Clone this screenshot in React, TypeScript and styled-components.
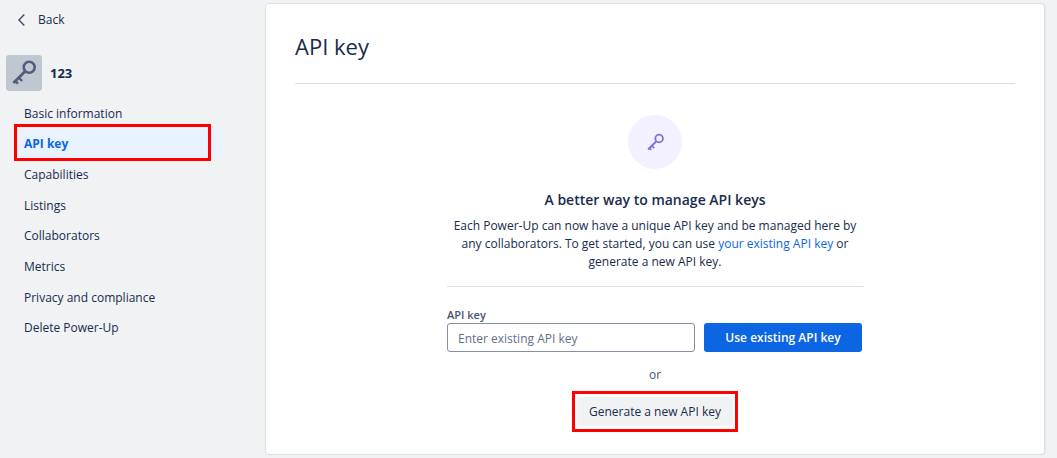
import React, { useState } from "react";
import styled, { createGlobalStyle, css } from "styled-components";

const ink = "#172b4d";
const inkSubtle = "#44546f";
const blue = "#0c66e4";
const line = "#dcdfe4";

const GlobalStyle = createGlobalStyle`
  * { box-sizing: border-box; }
  body {
    margin: 0;
    background: #f1f2f4;
    color: ${ink};
    font-family: "Open Sans", "Noto Sans", sans-serif;
    font-size: 12px;
    line-height: 18px;
  }
  button, input { font: inherit; }
  a { color: inherit; text-decoration: none; }
`;

const Page = styled.div`
  display: flex;
  min-height: 100vh;
  padding: 3px 12px 3px 0;
`;

const Sidebar = styled.aside`
  flex: 0 0 265px;
  padding: 8px 43px 0 6px;
`;

const BackLink = styled.a`
  display: flex;
  align-items: center;
  gap: 13px;
  padding-left: 12px;
`;

const Project = styled.div`
  display: flex;
  align-items: center;
  gap: 8px;
  margin-top: 26px;
  font-size: 13px;
  font-weight: 700;
  line-height: 20px;
`;

const ProjectIcon = styled.span`
  display: flex;
  width: 36px;
  height: 36px;
  border-radius: 3px;
  background: #c1c7d0;
  color: #505f79;
`;

const Menu = styled.ul`
  display: grid;
  grid-auto-rows: 1fr;
  align-items: center;
  height: 245px;
  margin: 7px 0 0 9px;
  padding: 0;
  list-style: none;
`;

const marked = css`
  position: relative;
  &::after {
    content: "";
    position: absolute;
    border: 3px solid #ff0000;
    pointer-events: none;
  }
`;

const MenuLink = styled.a<{ $active?: boolean }>`
  display: block;
  padding: 6px 9px 5px;
  border-radius: 3px;
  ${(p) =>
    p.$active &&
    css`
      ${marked}
      background: #e9f2ff;
      color: ${blue};
      font-weight: 700;
      &::after {
        inset: -5px 11px -3px -1px;
      }
    `}
`;

const Card = styled.main`
  flex: 1;
  min-width: 0;
  padding: 28px 29px;
  border: 1px solid ${line};
  border-radius: 4px;
  background: #ffffff;
  box-shadow: 1px 0 1px #e4e8ee;
`;

const Title = styled.h1`
  margin: 0;
  padding-bottom: 23px;
  border-bottom: 1px solid ${line};
  font-size: 22px;
  font-weight: 400;
  line-height: 28px;
`;

const Panel = styled.section`
  display: flex;
  flex-direction: column;
  align-items: center;
  width: 416px;
  max-width: 100%;
  margin: 31px auto 0;
  text-align: center;
`;

const Badge = styled.span`
  display: flex;
  align-items: center;
  justify-content: center;
  width: 54px;
  height: 54px;
  border-radius: 50%;
  background: #f3f0ff;
  color: #8270db;
`;

const Heading = styled.h2`
  margin: 22px 0 8px;
  font-size: 14px;
  font-weight: 600;
  line-height: 18px;
`;

const Text = styled.p`
  margin: 0;
`;

const InlineLink = styled.a`
  color: ${blue};
`;

const Form = styled.form`
  display: grid;
  grid-template-columns: 1fr 158px;
  column-gap: 9px;
  width: 100%;
  margin-top: 15px;
  padding: 20px 1px 0 0;
  border-top: 1px solid ${line};
  text-align: left;
`;

const Label = styled.label`
  grid-column: 1 / -1;
  color: ${inkSubtle};
  font-size: 11px;
  font-weight: 600;
  line-height: 16px;
`;

const Input = styled.input`
  width: 100%;
  height: 29px;
  padding: 2px 10px 0;
  border: 1px solid #8590a2;
  border-radius: 3px;
  background: #ffffff;
  color: ${ink};
  &::placeholder {
    color: #626f86;
    opacity: 1;
  }
`;

const Button = styled.button<{ $primary?: boolean }>`
  height: 29px;
  padding: 0 12px;
  border: 0;
  border-radius: 3px;
  background: ${(p) => (p.$primary ? blue : "#f1f2f4")};
  color: ${(p) => (p.$primary ? "#ffffff" : ink)};
  font-weight: ${(p) => (p.$primary ? 600 : 500)};
  white-space: nowrap;
  cursor: pointer;
`;

const Or = styled.span`
  margin: 14px 0 13px;
  color: ${inkSubtle};
`;

const MarkedBox = styled.div`
  ${marked}
  &::after {
    inset: -6px -5px;
  }
`;

const KeyIcon = ({ size }: { size: number }) => (
  <svg width={size} height={size} viewBox="0 0 36 36" fill="none" stroke="currentColor" aria-hidden="true">
    <circle cx="23.2" cy="12.2" r="5.5" strokeWidth="2.6" />
    <path d="M19.2 16.2 L7.4 28" strokeWidth="2.8" />
    <path d="M8.6 25.4 L12 28.6 M12.4 22.4 L16.2 26" strokeWidth="2.4" />
  </svg>
);

const BackIcon = () => (
  <svg width="7" height="12" viewBox="0 0 7 12" fill="none" stroke={inkSubtle} strokeWidth="1.5" aria-hidden="true">
    <path d="M6.3 0.5 L1 6 L6.3 11.5" />
  </svg>
);

const items = [
  "Basic information",
  "API key",
  "Capabilities",
  "Listings",
  "Collaborators",
  "Metrics",
  "Privacy and compliance",
  "Delete Power-Up",
];

export default function App() {
  const [key, setKey] = useState("");
  return (
    <>
      <GlobalStyle />
      <Page>
        <Sidebar>
          <BackLink href="#back">
            <BackIcon />
            Back
          </BackLink>
          <Project>
            <ProjectIcon>
              <KeyIcon size={36} />
            </ProjectIcon>
            123
          </Project>
          <nav>
            <Menu>
              {items.map((item) => (
                <li key={item}>
                  <MenuLink
                    href="#section"
                    $active={item === "API key"}
                    aria-current={item === "API key" ? "page" : undefined}
                  >
                    {item}
                  </MenuLink>
                </li>
              ))}
            </Menu>
          </nav>
        </Sidebar>
        <Card>
          <Title>API key</Title>
          <Panel>
            <Badge>
              <KeyIcon size={25} />
            </Badge>
            <Heading>A better way to manage API keys</Heading>
            <Text>
              Each Power-Up can now have a unique API key and be managed here by any collaborators. To get
              started, you can use <InlineLink href="#existing">your existing API key</InlineLink> or generate
              a new API key.
            </Text>
            <Form onSubmit={(e) => e.preventDefault()}>
              <Label htmlFor="api-key">API key</Label>
              <Input
                id="api-key"
                placeholder="Enter existing API key"
                value={key}
                onChange={(e) => setKey(e.target.value)}
              />
              <Button $primary type="submit">
                Use existing API key
              </Button>
            </Form>
            <Or>or</Or>
            <MarkedBox>
              <Button type="button">Generate a new API key</Button>
            </MarkedBox>
          </Panel>
        </Card>
      </Page>
    </>
  );
}
